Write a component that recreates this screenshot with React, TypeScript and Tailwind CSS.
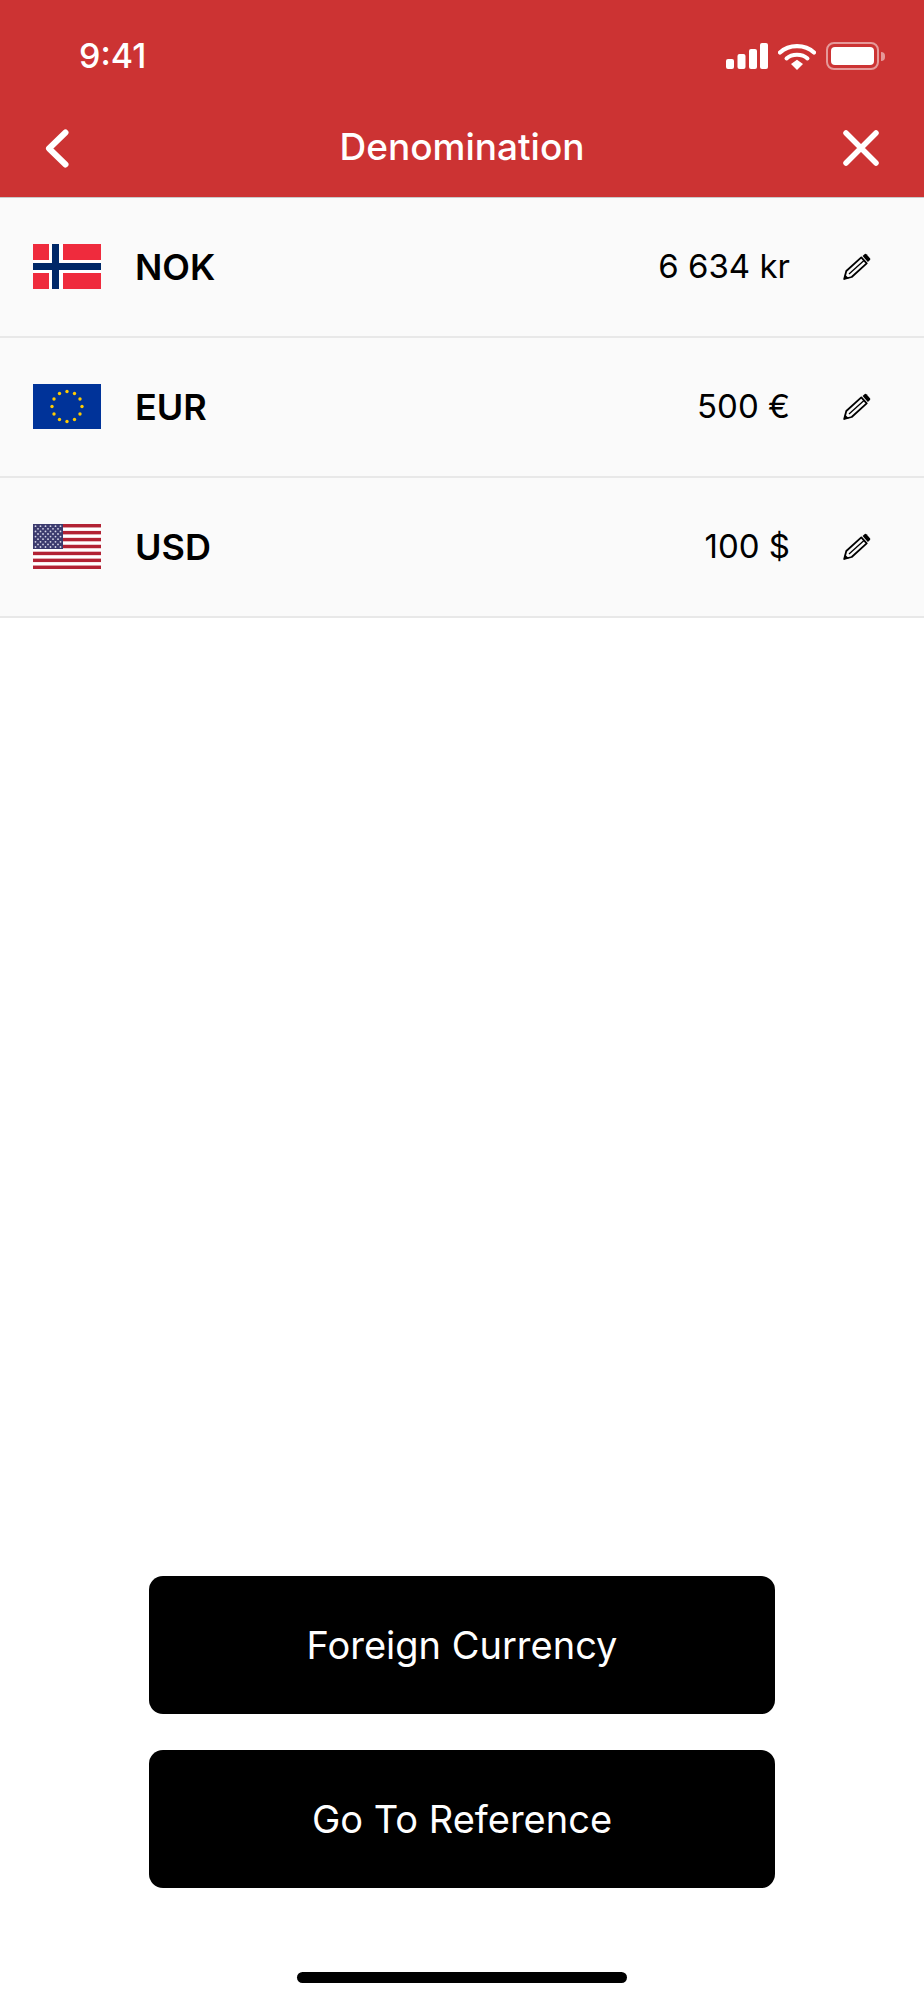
const rows = [
  { code: 'NOK', amount: '6 634 kr', flag: 'no' },
  { code: 'EUR', amount: '500 €', flag: 'eu' },
  { code: 'USD', amount: '100 $', flag: 'us' },
];

function Flag({ kind }: { kind: string }) {
  if (kind === 'no') {
    return (
      <svg width="68" height="45" viewBox="0 0 68 45" className="block">
        <rect width="68" height="45" fill="#ef2b3d" />
        <rect x="16" width="14" height="45" fill="#fff" />
        <rect y="16" width="68" height="13" fill="#fff" />
        <rect x="19" width="7" height="45" fill="#002868" />
        <rect y="19" width="68" height="7" fill="#002868" />
      </svg>
    );
  }
  if (kind === 'eu') {
    const stars = Array.from({ length: 12 }, (_, i) => {
      const a = (i * Math.PI) / 6;
      return { x: 34 + 15 * Math.sin(a), y: 22.5 - 15 * Math.cos(a) };
    });
    return (
      <svg width="68" height="45" viewBox="0 0 68 45" className="block">
        <rect width="68" height="45" fill="#003399" />
        {stars.map((s, i) => (
          <circle key={i} cx={s.x} cy={s.y} r="1.7" fill="#ffcc00" />
        ))}
      </svg>
    );
  }
  const stripes = [0, 2, 4, 6, 8, 10, 12];
  const dots: { x: number; y: number }[] = [];
  for (let r = 0; r < 9; r++) {
    for (let c = 0; c < (r % 2 ? 5 : 6); c++) {
      dots.push({ x: 2.5 + c * 5 + (r % 2 ? 2.5 : 0), y: 2.2 + r * 2.6 });
    }
  }
  return (
    <svg width="68" height="45" viewBox="0 0 68 45" className="block">
      <rect width="68" height="45" fill="#fff" />
      {stripes.map((s) => (
        <rect key={s} y={(s * 45) / 13} width="68" height={45 / 13} fill="#b22234" />
      ))}
      <rect width="30" height="25" fill="#3c3b6e" />
      {dots.map((d, i) => (
        <circle key={i} cx={d.x} cy={d.y} r="0.9" fill="#d6d6e6" />
      ))}
    </svg>
  );
}

function Pencil() {
  return (
    <svg width="28" height="27" viewBox="0 0 28 27" fill="none" className="block">
      <path d="M1.200 26 L3.300 18 L18.300 4.400 L23.700 10.400 L8.700 24 Z" stroke="#000" strokeWidth="1.800" strokeLinejoin="round" />
      <path d="M19.600 2.900 L21.800 1 Q22.600 0.500 23.400 1.200 L27 5.300 Q27.600 6.100 27 6.900 L24.900 8.900 Z" fill="#000" />
      <path d="M6 21 L21 7.400" stroke="#000" strokeWidth="1.300" />
      <path d="M0.800 26.400 L2 21.500 L5.800 25.200 Z" fill="#000" />
    </svg>
  );
}

function StatusIcons() {
  return (
    <div className="flex items-center">
      <svg width="42" height="26" viewBox="0 0 42 26" fill="#fff" className="block">
        <rect x="0" y="16" width="8" height="10" rx="2" />
        <rect x="11.500" y="11" width="8" height="15" rx="2" />
        <rect x="23" y="6" width="8" height="20" rx="2" />
        <rect x="34" y="0" width="8" height="26" rx="2" />
      </svg>
      <svg width="38" height="27" viewBox="0 0 38 27" fill="none" className="block ml-[10px]">
        <path d="M2 9.500 C11 1 27 1 36 9.500" stroke="#fff" strokeWidth="4.200" strokeLinecap="round" />
        <path d="M8.500 15.500 C14 10.500 24 10.500 29.500 15.500" stroke="#fff" strokeWidth="4" strokeLinecap="round" />
        <path d="M13 21 L19 16.800 L25 21 L19 27 Z" fill="#fff" />
      </svg>
      <div className="ml-[10px] flex items-center">
        <div className="h-[28px] w-[53px] rounded-[8px] border-2 border-white/50 p-[3px]">
          <div className="h-full w-full rounded-[4px] bg-white" />
        </div>
        <div className="ml-[2px] h-[9px] w-[4px] rounded-r-full bg-white/50" />
      </div>
    </div>
  );
}

export default function App() {
  return (
    <div className="flex h-[2000px] w-[924px] flex-col overflow-hidden bg-white font-['Inter',sans-serif] text-black">
      {/* Header */}
      <header className="h-[198px] border-b border-[#c9c9c9] bg-[#cc3333] text-white">
        <div className="flex h-[112px] items-center justify-between pl-[79px] pr-[39px]">
          <span className="text-[34px] leading-none font-medium">9:41</span>
          <StatusIcons />
        </div>
        <div className="flex h-[72px] items-center justify-between pl-[45px] pr-[45px]">
          <div className="w-[40px]">
            <svg width="24" height="39" viewBox="0 0 24 39" fill="none" className="block">
              <path d="M20.500 3.500 L4 19.500 L20.500 35.500" stroke="#fff" strokeWidth="6" strokeLinecap="round" strokeLinejoin="round" />
            </svg>
          </div>
          <span className="pb-[3px] text-[37px] leading-none font-medium">Denomination</span>
          <div className="flex w-[40px] justify-end">
            <svg width="36" height="36" viewBox="0 0 36 36" fill="none" className="block">
              <path d="M3 3 L33 33 M33 3 L3 33" stroke="#fff" strokeWidth="5.500" strokeLinecap="round" />
            </svg>
          </div>
        </div>
      </header>

      {/* Currency rows */}
      {rows.map((row) => (
        <div key={row.code} className="flex h-[140px] items-center border-b-2 border-[#e8e8e8] bg-[#fafafa] pb-[1px] pl-[33px] pr-[53px]">
          <Flag kind={row.flag} />
          <span className="ml-[34px] text-[36px] font-semibold">{row.code}</span>
          <span className="ml-auto text-[33px]">{row.amount}</span>
          <span className="ml-[53px]">
            <Pencil />
          </span>
        </div>
      ))}

      <div className="flex-1" />

      {/* Buttons */}
      <div className="flex flex-col items-center gap-[36px]">
        <button className="flex h-[138px] w-[626px] items-center justify-center rounded-[14px] bg-black text-[38px] text-white">Foreign Currency</button>
        <button className="flex h-[138px] w-[626px] items-center justify-center rounded-[14px] bg-black text-[38px] text-white">Go To Reference</button>
      </div>

      {/* Home indicator */}
      <div className="flex justify-center pt-[84px] pb-[17px]">
        <div className="h-[11px] w-[330px] rounded-full bg-black" />
      </div>
    </div>
  );
}
